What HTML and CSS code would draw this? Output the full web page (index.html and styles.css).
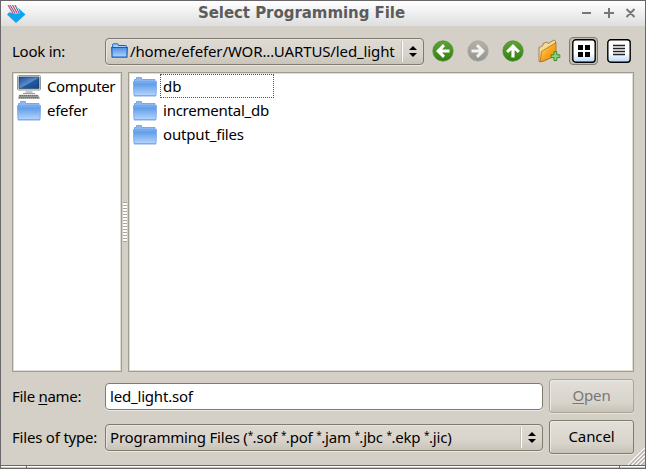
FILE: index.html
```html
<!DOCTYPE html>
<html lang="en">
<head>
<meta charset="utf-8">
<title>Select Programming File</title>
<link rel="stylesheet" href="styles.css">
</head>
<body>
<svg width="0" height="0" class="defs" aria-hidden="true">
  <defs>
    <linearGradient id="folderBody" x1="0" y1="0" x2="0" y2="1"><stop offset="0" stop-color="#7db0ef"/><stop offset=".2" stop-color="#629ee8"/><stop offset="1" stop-color="#b4d5ff"/></linearGradient>
    <linearGradient id="green" x1="0" y1="0" x2="0" y2="1"><stop offset="0" stop-color="#5fa437"/><stop offset="1" stop-color="#347f12"/></linearGradient>
    <linearGradient id="grey" x1="0" y1="0" x2="0" y2="1"><stop offset="0" stop-color="#b5b2ab"/><stop offset="1" stop-color="#96948e"/></linearGradient>
    <linearGradient id="gold" x1="0" y1="0" x2="1" y2="1"><stop offset="0" stop-color="#ffe9b0"/><stop offset=".5" stop-color="#f9a51d"/><stop offset="1" stop-color="#f39200"/></linearGradient>
    <linearGradient id="screen" x1="0" y1="0" x2="1" y2="1"><stop offset="0" stop-color="#1c4b94"/><stop offset=".5" stop-color="#5a8cca"/><stop offset=".55" stop-color="#2358a4"/><stop offset="1" stop-color="#174487"/></linearGradient>
    <linearGradient id="tile" x1="0" y1="0" x2="0" y2="1"><stop offset="0" stop-color="#fff"/><stop offset=".6" stop-color="#fff"/><stop offset="1" stop-color="#b5d7fb"/></linearGradient>
    <symbol id="folder" viewBox="0 0 24 21">
      <path d="M1.500 6V3.500h2V1.500h5v2h13.500V6" fill="#8db9f2" stroke="#77a9ea"/>
      <path d="M.5 5.500h23L23 19.500H1z" fill="url(#folderBody)" stroke="#78aaea"/>
      <path d="M1 20.200h22" stroke="#8fb4e4" stroke-width=".8"/>
    </symbol>
    <symbol id="arrow" viewBox="0 0 22 22"><path d="M11 4 4 11l7 7 2-2.200-3-3.200h7.500V9.400H10l3-3.200z" fill="#fff"/></symbol>
  </defs>
</svg>
<div class="window">
  <header class="titlebar">
    <svg class="logo" viewBox="0 0 20 20"><path d="M10 3 19.500 11.500 10 20 1 11.500z" fill="#0fa5ee"/><path d="M1.500 2H11l3 8-4 .8L4 9.500z" fill="#e9e4f2"/><path d="m2 2 5 8M6.500 2l4.500 8" stroke="#d0505a" stroke-width="1.200"/><path d="m4 2 5 8M9 2l4 8" stroke="#3a5396" stroke-width=".9"/></svg>
    <h1 class="title"><span>Select Programming File</span></h1>
    <svg class="controls" viewBox="0 0 56 12"><path d="M1 6h9M23 6h10M28 1v10M45.500 2l8 8M53.500 2l-8 8" fill="none" stroke="#777" stroke-width="2"/></svg>
  </header>
  <main class="dialog">
    <div class="lookin">
      <label class="label w-look">Look in:</label>
      <div class="combo path">
        <svg class="mini" viewBox="0 0 17 15"><path d="M1.700 4V1.600q0-.8.8-.8h4q.8 0 .8.8V2.500h7.400q.7 0 .7.8V5" fill="#a9cdfa" stroke="#1260bd"/><path d="M.7 4.700h15.600l-.4 9.400H1.100z" fill="url(#folderBody)" stroke="#1260bd" stroke-width="1.200"/></svg>
        <span class="t-path">/home/efefer/WOR...UARTUS/led_light</span>
        <i class="spin"></i>
      </div>
      <nav class="tools">
        <svg class="round" viewBox="0 0 22 22"><circle cx="11" cy="11" r="10.200" fill="url(#green)" stroke="#4c912c" stroke-width=".7"/><use href="#arrow"/></svg>
        <svg class="round" viewBox="0 0 22 22"><circle cx="11" cy="11" r="10.200" fill="url(#grey)" stroke="#a5a29b" stroke-width=".7"/><use href="#arrow" transform="rotate(180 11 11)" opacity=".85"/></svg>
        <svg class="round" viewBox="0 0 22 22"><circle cx="11" cy="11" r="10.200" fill="url(#green)" stroke="#4c912c" stroke-width=".7"/><use href="#arrow" transform="rotate(90 11 11)"/></svg>
        <svg class="newfolder" viewBox="0 0 24 24"><path d="M2 22.500V8.500l4-2V4.500l4-1.500 1 1.500L17 1l1.500 1v14L7 22z" fill="#f3dc99" stroke="#9b7a48" stroke-width=".9"/><path d="M3.200 23 4.500 12.500 19 3.500V17z" fill="url(#gold)" stroke="#b76c08" stroke-width=".8"/><path d="M17 12.700h2.800v3.100h3v2.800h-3v3H17v-3h-3v-2.800h3z" fill="#8bd67c" stroke="#388b31"/></svg>
        <span class="view pressed"><svg viewBox="0 0 24 24"><rect x=".8" y=".8" width="22.400" height="22.400" rx="3" fill="url(#tile)" stroke="#000" stroke-width="1.400"/><path d="M6 6h5v5H6zm7 0h5v5h-5zm-7 7h5v5H6zm7 0h5v5h-5z"/></svg></span>
        <span class="view"><svg viewBox="0 0 24 24"><rect x=".8" y=".8" width="22.400" height="22.400" rx="3" fill="url(#tile)" stroke="#000" stroke-width="1.400"/><path d="M6 6.500h12M6 9.500h12M6 12.500h12M6 15.500h12" stroke="#222" stroke-width="1.300"/></svg></span>
      </nav>
    </div>
    <div class="panes">
      <ul class="pane places">
        <li><svg class="pc" viewBox="0 0 24 24"><rect x=".5" y=".5" width="23" height="14.500" rx="1" fill="#e4e5e2" stroke="#969892"/><path d="M2 2h20v11.500H2z" fill="url(#screen)" stroke="#173865" stroke-width=".6"/><path d="M9 15.500h6l1 3H8z" fill="#c9cac7"/><path d="M6 18.500h12" stroke="#999"/><path d="M2 19.700h19l2.500 4H.8z" fill="#b0b0ad"/><path d="M2.500 20.800h18.500M2 22.800h20" stroke="#4f504d" stroke-dasharray="1.500 .5"/></svg><span class="t-computer">Computer</span></li>
        <li><svg class="folder"><use href="#folder"/></svg><span class="t-home">efefer</span></li>
      </ul>
      <div class="splitter"><i></i></div>
      <ul class="pane files">
        <li><svg class="folder"><use href="#folder"/></svg><span class="focus">db</span></li>
        <li><svg class="folder"><use href="#folder"/></svg><span class="t-incr">incremental_db</span></li>
        <li><svg class="folder"><use href="#folder"/></svg><span class="t-out">output_files</span></li>
      </ul>
    </div>
    <form class="fields">
      <label class="label w-name">File <u>n</u>ame:</label>
      <div class="input"><span class="t-file">led_light.sof</span></div>
      <button type="button" class="button disabled"><u>O</u>pen</button>
      <label class="label w-type">Files of type:</label>
      <div class="combo"><span class="t-type">Programming Files (<b>*</b>.sof <b>*</b>.pof <b>*</b>.jam <b>*</b>.jbc <b>*</b>.ekp <b>*</b>.jic)</span><i class="spin"></i></div>
      <button type="button" class="button">Cancel</button>
    </form>
    <svg class="grip" viewBox="0 0 18 18"><path d="M1 18 18 1M5 18 18 5M9 18l9-9M13 18l5-5" stroke="#fff" stroke-width="1.200"/><path d="M2.500 18 18 2.500M6.500 18 18 6.500M10.500 18l7.500-7.500M14.500 18l3.500-3.500" stroke="#a09b8f"/></svg>
  </main>
  <footer class="frame-bottom"><i></i><i></i><i></i></footer>
</div>
</body>
</html>
```
FILE: styles.css
```css
* { box-sizing: border-box; }
body { margin: 0; font: 15px/20px "Noto Sans", sans-serif; color: #000; overflow: hidden; }
ul { list-style: none; margin: 0; padding: 0; }
svg { display: block; flex: none; }
.defs { position: absolute; }
.window { width: 646px; height: 469px; display: flex; flex-direction: column; border: 1px solid #686666; border-bottom: 0; background: #d4d0c8; }
.titlebar { height: 25px; display: flex; align-items: center; padding: 0 8px 0 5px; background: linear-gradient(#fff, #dedede); }
.logo { width: 20px; height: 20px; margin-top: -2px; }
.title { flex: 1; margin: -2px 0 0; text-align: center; font: bold 15px/22px "DejaVu Sans", sans-serif; letter-spacing: -.05px; color: #5c5c5c; }
.title span { margin-left: -4px; }
.controls { width: 56px; height: 12px; margin-top: -2px; }
.dialog { position: relative; height: 439px; padding: 12px 11px 0; }
.lookin { display: flex; height: 27px; align-items: center; }
.label { width: 93px; white-space: nowrap; padding-bottom: 1px; }
.w-look { letter-spacing: -.25px; }
.w-name { letter-spacing: -.3px; }
.w-type { letter-spacing: -.2px; }
.combo, .input { height: 27px; display: flex; align-items: center; border: 1px solid #7f7b6d; border-radius: 4px; padding: 0 4px; white-space: nowrap; box-shadow: 0 1px 0 #ebe9e4; }
.combo > span, .input > span { padding-bottom: 1px; }
.combo { background: linear-gradient(#dedad3, #d8d4cc 60%, #c9c4b9); box-shadow: 0 1px 0 #ebe9e4, inset 1px 1px 0 #e8e5df; }
.input { background: #fff; }
.path { width: 319px; }
.mini { width: 17px; height: 15px; margin: -2px 2px 0 1px; }
.t-path { letter-spacing: -.12px; }
.t-file { letter-spacing: -.19px; }
.t-type { letter-spacing: -.2px; }
.t-type b { font-weight: 400; font-size: 10px; line-height: 10px; letter-spacing: -.6px; vertical-align: 4px; }
.spin { margin-left: auto; width: 17px; height: 21px; border-left: 1px solid #fff; box-shadow: -1px 0 0 #c5c0b5; display: grid; align-content: center; justify-content: end; gap: 3px; }
.spin::before, .spin::after { content: ""; border: 4px solid transparent; border-top: 0; border-bottom: 4px solid #000; margin-right: 2px; }
.spin::after { border-bottom: 0; border-top: 4px solid #000; }
.tools { display: flex; align-items: center; margin-left: 8px; }
.round { width: 22px; height: 22px; margin: -2px 13px 0 0; }
.newfolder { width: 24px; height: 24px; margin: -1px 8px 0 0; }
.view { width: 29px; height: 28px; display: grid; place-items: center; border-radius: 4px; margin: -1px 6px 0 0; }
.view:last-child { margin-right: 0; }
.view svg { width: 24px; height: 24px; }
.pressed { background: #c3beb3; border: 1px solid #817b6e; }
.panes { display: flex; height: 300px; margin-top: 7px; }
.pane { background: #fff; border: 1px solid #a09c8e; box-shadow: inset 0 0 0 1px #e0ddd5; padding: 1px 4px; }
.places { width: 110px; }
.files { width: 506px; }
.pane li { display: flex; height: 24px; align-items: center; white-space: nowrap; }
.pane svg { margin-right: 6px; }
.folder { width: 24px; height: 21px; margin-top: 1px; }
.pc { width: 24px; height: 24px; margin-top: 1px; }
.t-computer { letter-spacing: -.38px; }
.t-home { letter-spacing: -.25px; }
.t-incr { letter-spacing: -.24px; }
.t-out { letter-spacing: -.17px; }
.focus { width: 114px; height: 24px; line-height: 22px; border: 1px dotted #555; padding-left: 2px; margin-left: -3px; }
.splitter { width: 6px; display: grid; place-items: center; }
.splitter i { width: 4px; height: 40px; margin-top: -1px; background: repeating-linear-gradient(#aaa69b 0 1px, #fff 1px 3px); }
.fields { display: grid; grid-template-columns: 93px 438px 85px; row-gap: 7px; grid-template-rows: 34px 34px; align-items: center; margin-top: 7px; }
.button { font: inherit; letter-spacing: -.12px; margin-left: 6px; width: 85px; height: 34px; padding: 0 0 2px; border: 1px solid #7f7b6d; border-radius: 3px; background: linear-gradient(#e2dfd8, #d8d4cc 70%, #c7c2b6); box-shadow: 0 1px 0 #e8e5df, inset 1px 1px 0 #eceae5; }
.disabled { color: #777; border-color: #aaa597; }
u { text-underline-offset: 2px; }
.grip { position: absolute; right: 0; bottom: 0; width: 18px; height: 18px; }
.frame-bottom { display: grid; grid-template-columns: 25px 1fr 25px; gap: 1px; height: 4px; padding: 1px 0; background: #686666; }
.frame-bottom i { background: linear-gradient(#fff 0 1px, #c9c7c3 1px); }
```
